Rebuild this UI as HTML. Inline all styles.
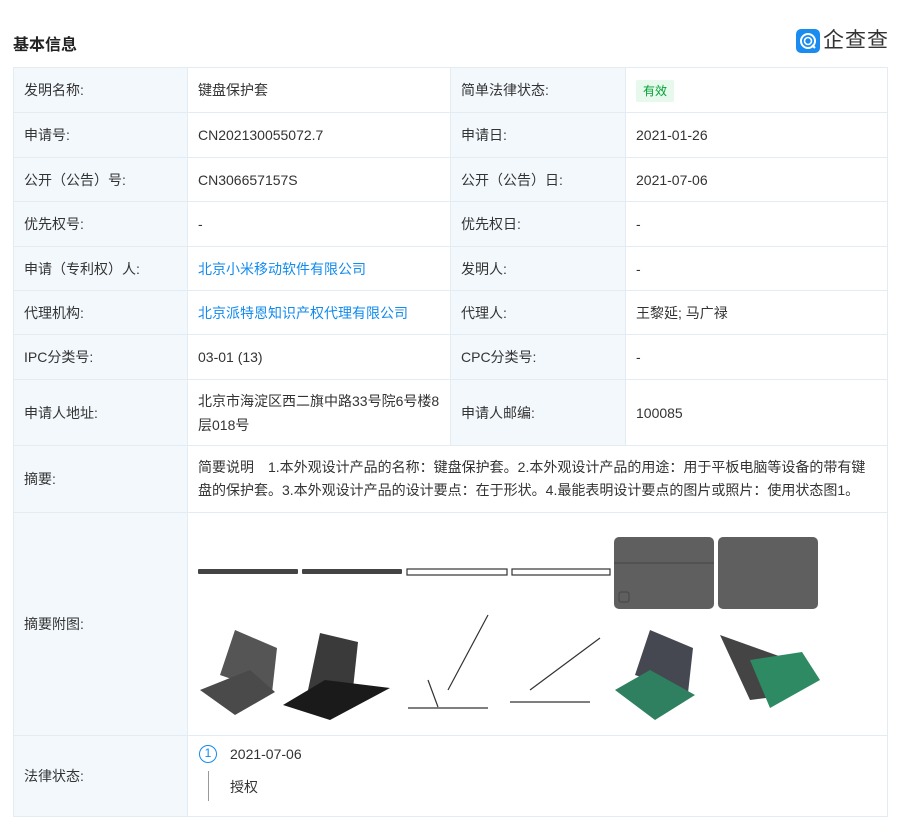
<!DOCTYPE html>
<html><head><meta charset="utf-8"><style>
body{margin:0;width:904px;height:835px;background:#fff;font-family:"Liberation Sans","Noto Sans CJK SC",sans-serif;font-size:14px;color:#333;position:relative;overflow:hidden}
.t{position:absolute;left:13px;top:67px;width:874px;border-collapse:collapse;table-layout:fixed}
.t td{border:1px solid #e4ecf3;padding:0 10px;vertical-align:middle;line-height:24px}
.l{background:#f3f8fc;color:#333}
a{color:#128bed;text-decoration:none}
.b{display:inline-block;background:#e6f9ec;color:#00a035;font-size:12px;line-height:22px;padding:0 7px;border-radius:2px}
</style></head><body>
<div style="position:absolute;left:13px;top:31px;font-size:16px;font-weight:bold;color:#222">基本信息</div>
<div style="position:absolute;left:796px;top:29px;width:24px;height:24px;background:#1a8cf0;border-radius:5px"></div>
<svg style="position:absolute;left:796px;top:29px" width="24" height="24"><circle cx="12" cy="12" r="7" fill="none" stroke="#fff" stroke-width="2"/><circle cx="12" cy="12" r="3.5" fill="none" stroke="#fff" stroke-width="1.6"/><path d="M16 16l3 3" stroke="#fff" stroke-width="2"/></svg>
<div style="position:absolute;left:823px;top:27px;font-size:21px;color:#333;letter-spacing:1px;line-height:28px">企查查</div>
<table class="t">
<colgroup><col style="width:174px"><col style="width:263px"><col style="width:175px"><col style="width:262px"></colgroup>
<tr style="height:45px"><td class="l">发明名称:</td><td>键盘保护套</td><td class="l">简单法律状态:</td><td><span class="b">有效</span></td></tr>
<tr style="height:45px"><td class="l">申请号:</td><td>CN202130055072.7</td><td class="l">申请日:</td><td>2021-01-26</td></tr>
<tr style="height:44px"><td class="l">公开（公告）号:</td><td>CN306657157S</td><td class="l">公开（公告）日:</td><td>2021-07-06</td></tr>
<tr style="height:45px"><td class="l">优先权号:</td><td>-</td><td class="l">优先权日:</td><td>-</td></tr>
<tr style="height:44px"><td class="l">申请（专利权）人:</td><td><a>北京小米移动软件有限公司</a></td><td class="l">发明人:</td><td>-</td></tr>
<tr style="height:44px"><td class="l">代理机构:</td><td><a>北京派特恩知识产权代理有限公司</a></td><td class="l">代理人:</td><td>王黎延; 马广禄</td></tr>
<tr style="height:45px"><td class="l">IPC分类号:</td><td>03-01 (13)</td><td class="l">CPC分类号:</td><td>-</td></tr>
<tr style="height:66px"><td class="l">申请人地址:</td><td>北京市海淀区西二旗中路33号院6号楼8层018号</td><td class="l">申请人邮编:</td><td>100085</td></tr>
<tr style="height:67px"><td class="l">摘要:</td><td colspan="3" style="line-height:23px">简要说明　1.本外观设计产品的名称：键盘保护套。2.本外观设计产品的用途：用于平板电脑等设备的带有键盘的保护套。3.本外观设计产品的设计要点：在于形状。4.最能表明设计要点的图片或照片：使用状态图1。</td></tr>
<tr style="height:223px"><td class="l">摘要附图:</td><td colspan="3"></td></tr>
<tr style="height:81px"><td class="l">法律状态:</td><td colspan="3"></td></tr>
</table>
<svg style="position:absolute;left:190px;top:530px" width="640" height="200">
<g fill="#444"><rect x="8" y="39" width="100" height="5" rx="1"/><rect x="112" y="39" width="100" height="5" rx="1"/></g>
<g fill="#fff" stroke="#333" stroke-width="1.2"><rect x="217" y="39" width="100" height="6"/><rect x="322" y="39" width="98" height="6"/></g>
<rect x="424" y="7" width="100" height="72" rx="5" fill="#5f5f5f"/><rect x="528" y="7" width="100" height="72" rx="5" fill="#5f5f5f"/>
<line x1="424" y1="33" x2="524" y2="33" stroke="#444"/><rect x="429" y="62" width="10" height="10" rx="2" fill="none" stroke="#444"/>
<polygon points="45,100 87,118 82,163 30,145" fill="#555"/><polygon points="10,160 60,140 85,162 45,185" fill="#4a4a4a"/>
<polygon points="130,103 168,112 162,168 118,160" fill="#3a3a3a"/><polygon points="93,175 135,150 200,158 140,190" fill="#1a1a1a"/>
<g stroke="#333" fill="none" stroke-width="1.2"><path d="M218 178h80M258 160l40-75M238 150l10 27"/><path d="M320 172h80M340 160l70-52"/></g>
<polygon points="460,100 503,118 498,163 445,145" fill="#454850"/><polygon points="425,160 460,140 505,165 465,190" fill="#2e8060"/>
<polygon points="530,105 600,130 600,165 560,170" fill="#444"/><polygon points="560,130 612,122 630,150 580,178" fill="#2e8a63"/>
</svg>
<div style="position:absolute;left:199px;top:745px;width:18px;height:18px;border:1.5px solid #128bed;border-radius:50%;box-sizing:border-box;color:#128bed;font-size:12px;text-align:center;line-height:15px">1</div>
<div style="position:absolute;left:208px;top:771px;width:1px;height:30px;background:#999"></div>
<div style="position:absolute;left:230px;top:746px">2021-07-06</div>
<div style="position:absolute;left:230px;top:777px">授权</div>
</body></html>
